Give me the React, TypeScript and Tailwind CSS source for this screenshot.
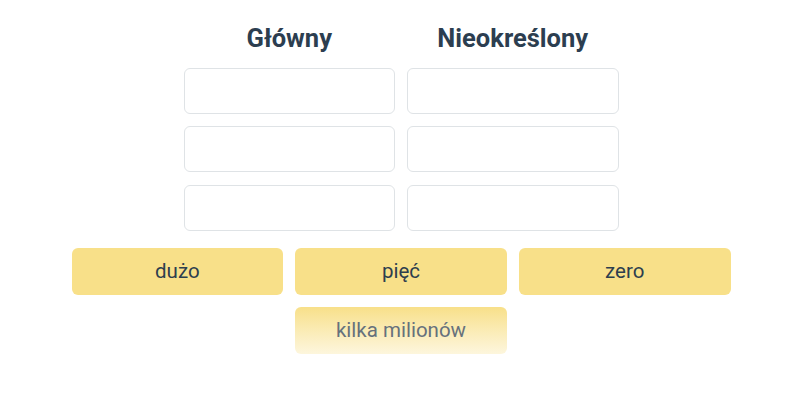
import React from 'react';

const columns = ['Główny', 'Nieokreślony'];
const words = ['dużo', 'pięć', 'zero'];

const App: React.FC = () => {
  return (
    <div className="w-[800px] h-[400px] bg-white font-['Roboto',sans-serif] flex flex-col items-center">
      <div className="grid grid-cols-2 gap-x-3 w-[435px] ml-[2px] mt-[21px]">
        {columns.map(c => (
          <h2 key={c} className="text-center text-[25.5px] font-bold text-[#2c3e50] h-[34px] leading-[34px] mb-[12.5px]">{c}</h2>
        ))}
        {[0, 1, 2, 3, 4, 5].map(i => (
          <div key={i} className="h-[46px] mb-[12.5px] rounded-md border border-[#dfe3e6] bg-white"></div>
        ))}
      </div>
      <div className="grid grid-cols-3 gap-x-3 gap-y-3 w-[659px] mt-[5px] ml-[2px]">
        {words.map(w => (
          <div key={w} className="h-[47px] rounded-md bg-[#f8e089] flex items-center justify-center text-[20.5px] text-[#2d3e4e]">{w}</div>
        ))}
        <div className="col-start-2 h-[47px] rounded-md bg-gradient-to-b from-[#f8e089] to-[#fdf6dd] flex items-center justify-center text-[20.5px] text-[#66717c]">kilka milionów</div>
      </div>
    </div>
  );
};

export default App;
